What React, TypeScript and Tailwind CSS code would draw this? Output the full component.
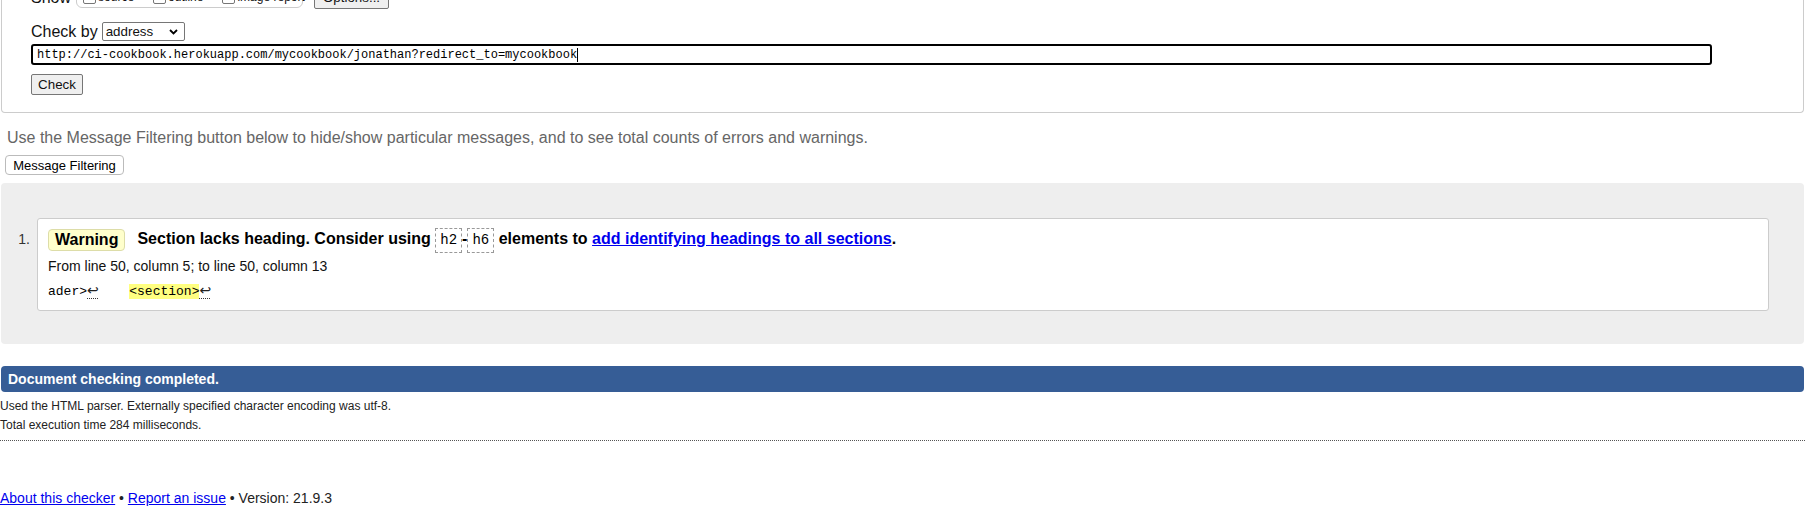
const sans = "font-['Liberation_Sans',Arial,sans-serif]";
const mono = "font-['Liberation_Mono','Courier_New',monospace]";

function Checkbox({ className = "" }: { className?: string }) {
  return (
    <span
      className={`inline-block w-[13px] h-[13px] border border-[#767676] rounded-[2px] bg-white shrink-0 ${className}`}
    />
  );
}

function Newline() {
  return (
    <span className="inline-block w-[11px] border-b border-dotted border-[#333] text-[#222] text-[14px] leading-[15px] font-['DejaVu_Sans',sans-serif]">↩</span>
  );
}

export default function App() {
  return (
    <div className={`w-[1805px] h-[507px] overflow-hidden bg-white text-[#111] ${sans}`}>
      {/* form fieldset (page is scrolled, top is cut off) */}
      <div className="-mt-[14px] mx-px h-[127px] border border-t-0 border-[#ccc] rounded-b-[4px] pl-[29px]">
        <div className="flex items-end h-[23px]">
          <span className="text-[16px] leading-[18px] mb-[2px]">Show</span>
          <div className="ml-[5px] mb-px h-[24px] w-[227px] border border-[#ccc] rounded-[6px] flex items-center pt-[2px] pl-[6px] text-[12px] whitespace-nowrap">
            <Checkbox />
            <span className="ml-[2px] shrink-0">source</span>
            <Checkbox className="ml-[19px]" />
            <span className="ml-[2px] shrink-0">outline</span>
            <Checkbox className="ml-[19px]" />
            <span className="ml-[2px] shrink-0">image report</span>
          </div>
          <button className="ml-[11px] h-[22px] w-[75px] bg-[#efefef] border border-[#767676] rounded-[2px] text-[13.33px] leading-none">
            Options...
          </button>
        </div>

        <div className="flex items-center mt-[13px] h-[19px]">
          <span className="text-[16px] leading-[18px]">Check by</span>
          <div className="ml-[4px] h-[19px] w-[83px] border border-[#767676] rounded-[2px] flex items-center justify-between pl-[3px] pr-[6px] text-[13.33px]">
            <span>address</span>
            <svg width="9" height="6" viewBox="0 0 9 6" fill="none">
              <path d="M1 1 L4.5 4.5 L8 1" stroke="#000" strokeWidth="1.8" />
            </svg>
          </div>
        </div>

        <div className="mt-[3px] h-[21px] w-[1681px] border-2 border-black rounded-[3px] flex items-center pl-[4px]">
          <span className={`${mono} text-[12px] leading-[14px] text-black`}>
            http://ci-cookbook.herokuapp.com/mycookbook/jonathan?redirect_to=mycookbook
          </span>
          <span className="w-px h-[14px] bg-black" />
        </div>

        <button className="mt-[9px] h-[21px] w-[52px] bg-[#efefef] border border-[#767676] rounded-[2px] text-[13.33px] leading-none block">
          Check
        </button>
      </div>

      <p className="mt-[16px] ml-[7px] text-[16px] leading-[18px] text-[#666]">
        Use the Message Filtering button below to hide/show particular messages, and to see total counts of errors and warnings.
      </p>

      <button className="mt-[8px] ml-[5px] h-[20px] w-[119px] bg-white border border-[#bbb] rounded-[4px] text-[13px] leading-none text-black block">
        Message Filtering
      </button>

      {/* results */}
      <div className="mt-[8px] mx-px h-[161px] bg-[#eee] rounded-[4px] pt-[35px] flex items-start">
        <span className="w-[36px] pr-[7px] text-right text-[14px] leading-[18px] text-[#333] mt-[12px]">1.</span>
        <div className="flex-1 mr-[35px] h-[93px] bg-white border border-[#ccc] rounded-[3px] pl-[10px] pt-[8px]">
          <div className="flex items-center h-[25px]">
            <span className="h-[22px] px-[6px] flex items-center bg-[#ffffcc] border border-[#dddda8] rounded-[4px] text-[16px] font-bold text-black">
              Warning
            </span>
            <span className="ml-[12px] text-[16px] font-bold text-black leading-[25px]">
              Section lacks heading. Consider using{" "}
              <code className={`${mono} inline-block align-middle font-normal text-[14px] leading-[17px] py-[3px] px-[4px] border border-dashed border-[#999]`}>h2</code>
              -
              <code className={`${mono} inline-block align-middle font-normal text-[14px] leading-[17px] py-[3px] px-[4px] border border-dashed border-[#999]`}>h6</code>{" "}
              elements to{" "}
              <a href="#" className="text-[#0000ee] underline">
                add identifying headings to all sections
              </a>
              .
            </span>
          </div>
          <p className="mt-[5px] text-[14px] leading-[18px] text-[#111]">
            From line 50, column 5; to line 50, column 13
          </p>
          <p className={`mt-[8px] ${mono} text-[13px] leading-[17px] whitespace-pre text-black`}>
            ader&gt;<Newline />{"    "}<span className="bg-[#ffff80]">&lt;section&gt;</span><Newline />
          </p>
        </div>
      </div>

      <div className="mt-[22px] mx-px h-[26px] bg-[#365d96] rounded-[4px] flex items-center pl-[7px]">
        <span className="text-white font-bold text-[14px]">Document checking completed.</span>
      </div>

      <div className="mt-[5px] text-[12px] leading-[19px] text-[#222]">
        <p>Used the HTML parser. Externally specified character encoding was utf-8.</p>
        <p>Total execution time 284 milliseconds.</p>
      </div>

      <div className="mt-[5px] border-t border-dotted border-[#555]" />

      <p className="mt-[49px] text-[14px] leading-[17px] text-[#222]">
        <a href="#" className="text-[#0000ee] underline">About this checker</a>
        {" • "}
        <a href="#" className="text-[#0000ee] underline">Report an issue</a>
        {" • Version: 21.9.3"}
      </p>
    </div>
  );
}
